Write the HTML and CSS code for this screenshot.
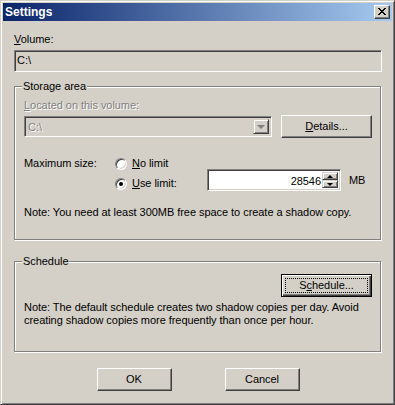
FILE: index.html
```html
<!DOCTYPE html>
<html>
<head>
    <meta name="viewport" content="width=device-width, initial-scale=1.0">
    <link rel="stylesheet" href="styles.css">
</head>
<body>
    <div class="window">
        <!-- Title bar -->
        <div class="titlebar">
            <span class="title">Settings</span>
            <span class="close">
                <svg width="8" height="7" viewBox="0 0 8 7" shape-rendering="crispEdges">
                    <path d="M0 0h2v1H0zM6 0h2v1H6zM1 1h2v1H1zM5 1h2v1H5zM2 2h4v1H2zM3 3h2v1H3zM2 4h4v1H2zM1 5h2v1H1zM5 5h2v1H5zM0 6h2v1H0zM6 6h2v1H6z" fill="#000"/>
                </svg>
            </span>
        </div>

        <div class="content">
            <div class="label"><u>V</u>olume:</div>
            <div class="edit readonly">C:\</div>

            <!-- Storage area -->
            <div class="group storage">
                <span class="legend">Storage area</span>
                <div class="label disabled"><u>L</u>ocated on this volume:</div>
                <div class="row">
                    <div class="combo">
                        <span class="combo-text">C:\</span>
                        <span class="drop"><span class="arrow-down gray"></span></span>
                    </div>
                    <span class="btn details"><u>D</u>etails...</span>
                </div>

                <div class="size">
                    <div class="size-label">Maximum size:</div>
                    <div class="options">
                        <div class="option">
                            <span class="radio"></span>
                            <span class="opt-text"><u>N</u>o limit</span>
                        </div>
                        <div class="option limit">
                            <div class="choice">
                                <span class="radio checked"></span>
                                <span class="opt-text"><u>U</u>se limit:</span>
                            </div>
                            <div class="spin-edit">
                                <span class="value">28546</span>
                                <div class="spinner">
                                    <span class="spin"><span class="arrow-up"></span></span>
                                    <span class="spin"><span class="arrow-down"></span></span>
                                </div>
                            </div>
                            <span class="unit">MB</span>
                        </div>
                    </div>
                </div>

                <p class="note">Note: You need at least 300MB free space to create a shadow copy.</p>
            </div>

            <!-- Schedule -->
            <div class="group schedule">
                <span class="legend">Schedule</span>
                <div class="row right">
                    <span class="btn default">S<u>c</u>hedule...</span>
                </div>
                <p class="note">Note: The default schedule creates two shadow copies per day. Avoid<br>creating shadow copies more frequently than once per hour.</p>
            </div>

            <!-- Dialog buttons -->
            <div class="actions">
                <span class="btn action">OK</span>
                <span class="btn action">Cancel</span>
            </div>
        </div>
    </div>
</body>
</html>
```

FILE: styles.css
```css
body {
    margin: 0;
    background-color: #d4d0c8;
    font-family: "Liberation Sans", Arial, sans-serif;
    font-size: 11px;
    line-height: 13px;
    letter-spacing: -0.05px;
    color: #000;
}

/* Classic window frame */
.window {
    width: 395px;
    height: 405px;
    box-sizing: border-box;
    background-color: #d4d0c8;
    border: 1px solid;
    border-color: #d4d0c8 #404040 #404040 #d4d0c8;
    box-shadow: inset 1px 1px #fff, inset -1px -1px #808080;
    padding: 2px;
}

.titlebar {
    height: 18px;
    display: flex;
    justify-content: space-between;
    align-items: flex-start;
    background: linear-gradient(to right, #0a246a, #a6caf0);
}

.title {
    color: #fff;
    font-weight: bold;
    font-size: 12px;
    line-height: 18px;
    letter-spacing: 0;
    padding-left: 2px;
}

.close {
    width: 16px;
    height: 14px;
    box-sizing: border-box;
    margin: 2px 2px 0 0;
    background-color: #d4d0c8;
    border: 1px solid;
    border-color: #fff #404040 #404040 #fff;
    box-shadow: inset -1px -1px #808080;
    display: flex;
    justify-content: center;
    align-items: center;
    padding-bottom: 1px;
}

/* Dialog body */
.content {
    padding: 0 10px 0 11px;
}

.label {
    margin-top: 12px;
}

.disabled,
.combo-text {
    color: #808080;
    text-shadow: 1px 1px #fff;
}

.edit {
    margin-top: 4px;
    height: 22px;
    box-sizing: border-box;
    border: 1px solid;
    border-color: #808080 #fff #fff #808080;
    box-shadow: inset 1px 1px #404040, inset -1px -1px #d4d0c8;
    padding: 3px 0 0 2px;
}

/* Group boxes */
.group {
    position: relative;
    width: 367px;
    box-sizing: border-box;
    border: 1px solid #808080;
    box-shadow: 1px 1px 0 #fff, inset 1px 1px 0 #fff;
    padding: 0 8px 0 9px;
}

.legend {
    position: absolute;
    top: -7px;
    left: 7px;
    padding: 0 1px;
    background-color: #d4d0c8;
}

.storage {
    margin-top: 14px;
    padding-top: 12px;
    padding-bottom: 20px;
}

.storage .label {
    margin-top: 0;
}

.schedule {
    margin-top: 21px;
    padding-top: 12px;
    padding-bottom: 24px;
}

.row {
    display: flex;
    align-items: center;
    justify-content: space-between;
    margin-top: 3px;
}

.schedule .row {
    margin-top: 0;
}

.right {
    justify-content: flex-end;
}

.combo {
    width: 248px;
    height: 21px;
    box-sizing: border-box;
    border: 1px solid;
    border-color: #808080 #fff #fff #808080;
    box-shadow: inset 1px 1px #404040, inset -1px -1px #d4d0c8;
    padding: 2px;
    display: flex;
    justify-content: space-between;
}

.combo-text {
    padding: 2px 0 0 1px;
}

.drop {
    width: 16px;
    height: 15px;
    box-sizing: border-box;
    border: 1px solid;
    border-color: #d4d0c8 #404040 #404040 #d4d0c8;
    box-shadow: inset 1px 1px #fff, inset -1px -1px #808080;
    display: flex;
    justify-content: center;
    align-items: center;
}

/* Buttons */
.btn {
    height: 23px;
    box-sizing: border-box;
    border: 1px solid;
    border-color: #fff #404040 #404040 #fff;
    box-shadow: inset -1px -1px #808080;
    display: flex;
    justify-content: center;
    align-items: center;
}

.details {
    width: 91px;
}

.default {
    width: 91px;
    border-color: #000;
    box-shadow: inset 1px 1px #fff, inset -1px -1px #404040, inset -2px -2px #808080;
    outline: 1px dotted #000;
    outline-offset: -5px;
}

.actions {
    display: flex;
    justify-content: center;
    gap: 53px;
    margin-top: 16px;
}

.action {
    width: 75px;
}

/* Size options */
.size {
    display: flex;
    margin-top: 19px;
}

.size-label {
    width: 91px;
}

.option {
    display: flex;
    align-items: center;
    height: 13px;
}

.choice {
    display: flex;
    align-items: center;
    width: 92px;
    margin-top: 8px;
}

.limit {
    height: 22px;
    margin-top: -1px;
    align-items: flex-start;
}

.opt-text {
    margin-left: 5px;
}

.radio {
    position: relative;
    width: 12px;
    height: 12px;
    box-sizing: border-box;
    border-radius: 50%;
    border: 1px solid;
    border-color: #808080 #fff #fff #808080;
    box-shadow: inset 1px 1px #404040, inset -1px -1px #d4d0c8;
    background-color: #fff;
    flex-shrink: 0;
}

.checked::after {
    content: "";
    position: absolute;
    left: 3px;
    top: 3px;
    width: 4px;
    height: 4px;
    border-radius: 50%;
    background-color: #000;
}

.spin-edit {
    width: 134px;
    height: 22px;
    box-sizing: border-box;
    border: 1px solid;
    border-color: #808080 #fff #fff #808080;
    box-shadow: inset 1px 1px #404040, inset -1px -1px #d4d0c8;
    background-color: #fff;
    padding: 2px;
    display: flex;
    justify-content: flex-end;
}

.value {
    padding: 3px 1px 0 0;
}

.spinner {
    display: flex;
    flex-direction: column;
    width: 16px;
}

.spin {
    height: 9px;
    box-sizing: border-box;
    background-color: #d4d0c8;
    border: 1px solid;
    border-color: #d4d0c8 #404040 #404040 #d4d0c8;
    box-shadow: inset 1px 1px #fff, inset -1px -1px #808080;
    display: flex;
    justify-content: center;
    align-items: center;
}

.arrow-up,
.arrow-down {
    width: 0;
    height: 0;
    border-left: 3px solid transparent;
    border-right: 3px solid transparent;
}

.arrow-up {
    border-bottom: 3px solid #000;
}

.arrow-down {
    border-top: 3px solid #000;
}

.drop .arrow-down {
    border-left-width: 4px;
    border-right-width: 4px;
    border-top-width: 4px;
}

.gray {
    border-top-color: #808080 !important;
}

.unit {
    align-self: center;
    margin-left: 8px;
}

.note {
    margin: 15px 0 0 0;
    white-space: nowrap;
}

.schedule .note {
    margin-top: 4px;
}
```
